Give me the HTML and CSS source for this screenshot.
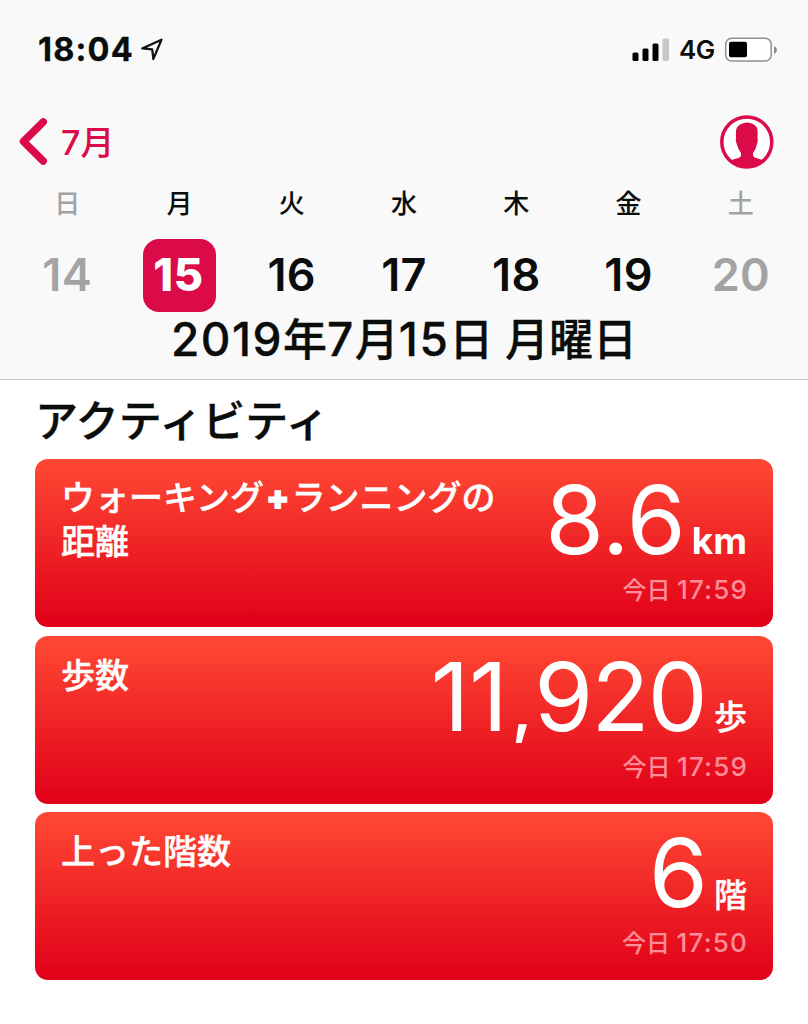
FILE: index.html
```html
<!DOCTYPE html>
<html lang="ja">
<head>
<meta charset="utf-8">
<title>アクティビティ</title>
<link rel="stylesheet" href="styles.css">
</head>
<body>
<header class="header">
  <div class="status">
    <span class="clock">18:04</span>
    <svg class="location" width="24" height="24" viewBox="0 0 24 24"><path d="M2.200 10.400L21.500 1.700L13.300 21L12.200 11.400Z"/></svg>
    <div class="status-right">
      <svg width="38" height="24" viewBox="0 0 38 24"><rect x="0.500" y="14.500" width="6" height="8.500" rx="1.500"/><rect x="10.500" y="10.500" width="6" height="12.500" rx="1.500"/><rect x="20.500" y="5.500" width="6" height="17.500" rx="1.500"/><rect x="30.500" y="0.500" width="6.500" height="22.500" rx="1.500" fill="#c6c6c6"/></svg>
      <span class="network">4G</span>
      <svg width="54" height="26" viewBox="0 0 54 26"><rect x="1.700" y="1.200" width="45.500" height="22.800" rx="6" fill="#fff" stroke="#909090" stroke-width="1.500"/><rect x="5" y="4.700" width="18" height="15.500" rx="2"/><path d="M50 9.200Q53 10.500 53 13T50 17Z" fill="#888"/></svg>
    </div>
  </div>
  <nav class="nav">
    <a class="back"><svg width="30" height="50" viewBox="0 0 30 50"><path d="M24.200 5L4.500 24.500L24.200 44"/></svg><span class="back-label"><span>7</span><span>月</span></span></a>
    <svg class="profile" width="54" height="54" viewBox="0 0 54 54"><circle cx="26.800" cy="27" r="25" fill="#fff" stroke="#db0a48" stroke-width="3.500"/><path fill="#db0a48" d="M16 21Q15.500 15 17 12.500Q20 8.200 27 7.600Q34 8.200 36.800 12.500Q38 15 37.500 22Q38.300 26 37 29L35.500 34L33 38L33 40.500Q33.500 42.500 37 43.300L44 45.500Q36 53 27 53Q18 53 9.600 45.500L17.500 43.300Q20.800 42.500 21 40.500L21 38L18.500 34L16.700 29Q15.300 26 16 22Z"/></svg>
  </nav>
  <div class="week names"><span class="off">日</span><span>月</span><span>火</span><span>水</span><span>木</span><span>金</span><span class="off">土</span></div>
  <div class="week days"><span class="off">14</span><span class="selected">15</span><span>16</span><span>17</span><span>18</span><span>19</span><span class="off">20</span></div>
  <h1 class="date"><span>2019</span>年<span>7</span>月<span>15</span>日 月曜日</h1>
</header>
<main class="content">
  <h2 class="section">アクティビティ</h2>
  <section class="card">
    <h3 class="name">ウォーキング<b class="plus">+</b>ランニングの<br>距離</h3>
    <div class="reading"><p class="value">8.6<span class="unit latin">km</span></p><p class="time">今日 <span>17:59</span></p></div>
  </section>
  <section class="card">
    <h3 class="name single">歩数</h3>
    <div class="reading"><p class="value">11<span class="comma">,</span><span class="tight">920</span><span class="unit steps">歩</span></p><p class="time">今日 <span>17:59</span></p></div>
  </section>
  <section class="card">
    <h3 class="name single">上った階数</h3>
    <div class="reading"><p class="value">6<span class="unit">階</span></p><p class="time">今日 <span>17:50</span></p></div>
  </section>
</main>
</body>
</html>
```
FILE: styles.css
```css
* { box-sizing: border-box; margin: 0; padding: 0; }
body { width: 808px; height: 1024px; overflow: hidden; background: #fff; color: #0b0c0c; font-family: Inter, "Noto Sans CJK JP", sans-serif; }
svg { display: block; flex: none; }
.header { height: 380px; padding-top: 30px; background: #f9f9f9; border-bottom: 1px solid #c4c4c4; }
.status { display: flex; align-items: center; height: 40px; padding: 0 30px 0 38px; }
.clock { width: 102px; font-size: 32.500px; font-weight: 700; line-height: 40px; letter-spacing: 1.200px; white-space: nowrap; -webkit-text-stroke: 0.300px currentColor; }
.location { fill: none; stroke: #111; stroke-width: 2.200; stroke-linejoin: round; }
.status-right { display: flex; align-items: center; margin-left: auto; }
.network { width: 54px; padding-left: 9px; font-size: 26px; font-weight: 600; line-height: 42px; letter-spacing: -0.500px; white-space: nowrap; }
.nav { display: flex; align-items: center; justify-content: space-between; height: 54px; margin-top: 45px; padding: 0 34px 0 19px; color: #db0a48; }
.back { display: flex; align-items: center; gap: 12px; font-size: 34px; font-weight: 500; line-height: 50px; }
.back svg { fill: none; stroke: currentColor; stroke-width: 7.500; stroke-linecap: round; stroke-linejoin: round; }
.back-label { display: flex; padding-top: 1px; }
.week { display: grid; grid-template-columns: repeat(7, 1fr); padding: 0 11px; text-align: center; }
.names { height: 40px; margin-top: 15px; font-size: 26px; font-weight: 500; line-height: 40px; }
.off { color: #a3a3a3; }
.days { height: 73px; margin-top: 15px; font-size: 45px; font-weight: 600; line-height: 71px; }
.days span { letter-spacing: 0.300px; }
.selected { width: 73px; border-radius: 16px; background: #db0a48; color: #fff; font-weight: 800; justify-self: center; }
.days .selected { padding-right: 2px; letter-spacing: 0.500px; }
.date { height: 56px; font-size: 44px; font-weight: 500; line-height: 55px; text-align: center; white-space: nowrap; -webkit-text-stroke: 0.300px currentColor; }
.date span { font-size: 46px; letter-spacing: 1.500px; }
.content { padding: 0 35px; }
.section { height: 79px; padding-top: 13px; font-size: 43px; font-weight: 500; line-height: 56px; white-space: nowrap; -webkit-text-stroke: 0.400px currentColor; }
.card { display: flex; justify-content: space-between; height: 168px; margin-bottom: 8.670px; padding: 15px 26px 0; border-radius: 13px; background: linear-gradient(#ff4934, #e00018); color: #fff; }
.name { padding-top: 2px; font-size: 34px; font-weight: 500; line-height: 44px; white-space: nowrap; -webkit-text-stroke: 0.400px currentColor; }
.single { padding-top: 3px; }
.plus { margin: 0 2px; font-weight: 900; -webkit-text-stroke: 1px currentColor; }
.value { height: 92px; font-size: 95px; font-weight: 400; line-height: 92px; text-align: right; white-space: nowrap; }
.comma { margin: 0 2px 0 4px; font-size: 64px; font-weight: 600; }
.tight { letter-spacing: -1.700px; }
.unit { margin-left: 6px; font-size: 33px; font-weight: 500; -webkit-text-stroke: 0.400px currentColor; }
.unit.steps { display: inline-block; margin-left: 8px; line-height: 40px; vertical-align: 2px; }
.latin { font-size: 37px; font-weight: 700; -webkit-text-stroke: 0; }
.time { height: 46px; font-size: 24px; font-weight: 500; line-height: 48px; text-align: right; color: #ff8d99; white-space: nowrap; }
.time span { margin-right: -1px; font-size: 26px; letter-spacing: 1.200px; }
```
